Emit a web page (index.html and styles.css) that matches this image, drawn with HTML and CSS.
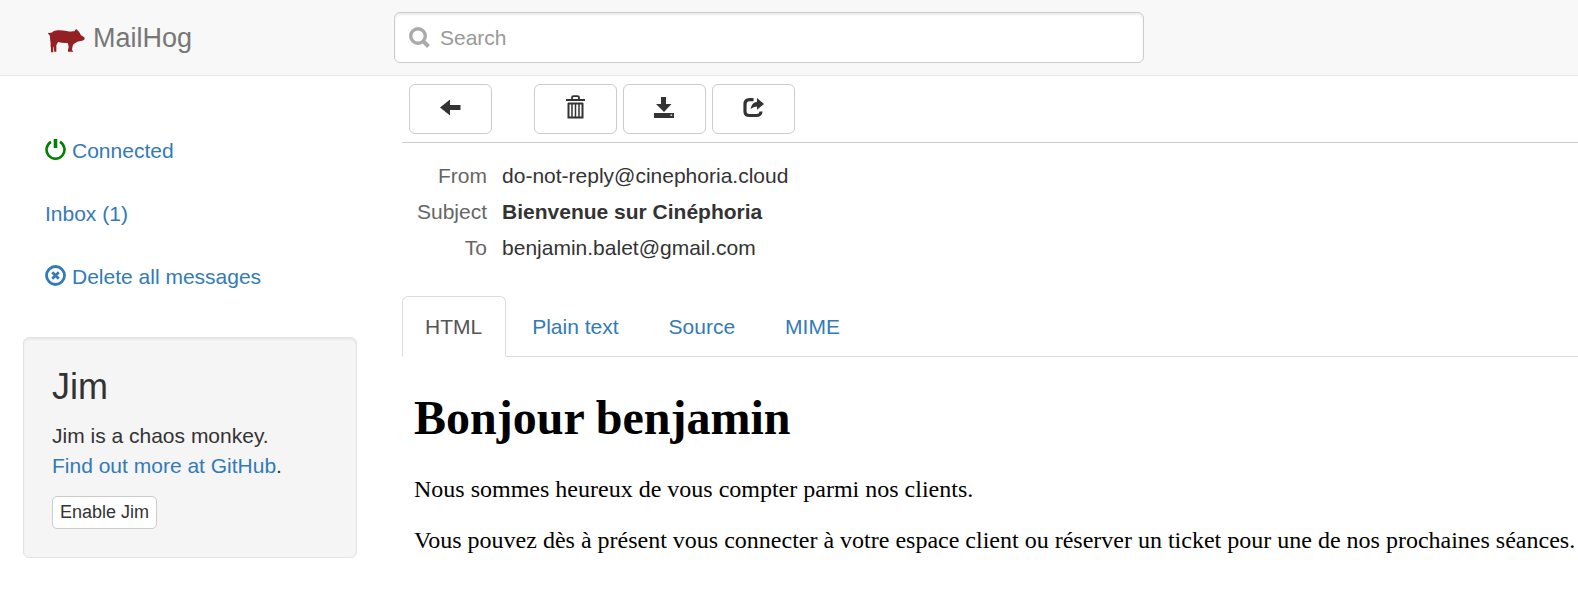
FILE: index.html
```html
<!DOCTYPE html>
<html lang="en">
<head>
<meta charset="utf-8">
<title>MailHog</title>
<link rel="stylesheet" href="styles.css">
</head>
<body>
<header class="navbar">
  <a class="brand" href="#">
    <svg class="brand-logo" viewBox="0 0 111 72" aria-hidden="true"><path d="M0 14Q1 10 5 12Q9 9 11 11Q16 5 28 4Q42 3 56 6Q66 9 75 7L79 7L84 0L91 6Q96 11 99 19L109 25L110 31Q106 36 98 36L88 38Q82 42 77 45Q73 50 73 57L72 62L76 68H60V61L62 56Q62 48 59 42Q44 43 30 39Q27 45 25 49L25 57V68H19L17 59V52L15 57L16 70H9V58Q7 50 8 43Q6 35 6 24Q6 20 7 17Q6 22 4 19Q4 16 0 14Z"/></svg>
    <span>MailHog</span>
  </a>
  <form class="search" role="search">
    <svg class="search-icon" viewBox="0 0 21 21" aria-hidden="true"><circle cx="9" cy="9" r="7.300" fill="none" stroke="currentColor" stroke-width="3.400"/><path d="M14 14L19.500 19.500" stroke="currentColor" stroke-width="4" fill="none"/></svg>
    <input class="search-input" type="text" placeholder="Search" aria-label="Search">
  </form>
</header>
<div class="page">
  <aside class="sidebar">
    <ul class="menu">
      <li><a href="#"><svg class="icon status" viewBox="0 0 21 21" aria-hidden="true"><path d="M6 2.900A9 9 0 1 0 15 2.900" fill="none" stroke="currentColor" stroke-width="2.600"/><path d="M10.500 0V9" stroke="currentColor" stroke-width="3.600"/></svg><span>Connected</span></a></li>
      <li><a href="#">Inbox (1)</a></li>
      <li><a href="#"><svg class="icon" viewBox="0 0 21 21" aria-hidden="true"><circle cx="10.500" cy="10.500" r="9" fill="none" stroke="currentColor" stroke-width="2.800"/><path d="M7.200 7.200L13.800 13.800M13.800 7.200L7.200 13.800" stroke="currentColor" stroke-width="2.700"/></svg><span>Delete all messages</span></a></li>
    </ul>
    <section class="well">
      <h3>Jim</h3>
      <p>Jim is a chaos monkey.<br><a href="#">Find out more at GitHub</a>.</p>
      <button class="btn btn-small" type="button">Enable Jim</button>
    </section>
  </aside>
  <main class="preview">
    <div class="toolbar">
      <button class="btn btn-tool" type="button" aria-label="Back"><svg class="icon" viewBox="0 0 21 21" aria-hidden="true"><path d="M0 10.500L10 2.500V8H20.500V13H10V18.500Z" fill="currentColor"/></svg></button>
      <div class="group">
        <button class="btn btn-tool" type="button" aria-label="Delete"><svg class="icon icon-tall" viewBox="0 0 21 25" aria-hidden="true"><path d="M1 5H20M7 4.500V2.500Q7 1.200 8.500 1.200H12.500Q14 1.200 14 2.500V4.500" fill="none" stroke="currentColor" stroke-width="1.800"/><path d="M3 8.500H18M3.500 8V22.500H17.500V8" fill="none" stroke="currentColor" stroke-width="2"/><path d="M7 9V22M10.500 9V22M14 9V22" fill="none" stroke="currentColor" stroke-width="1.500"/></svg></button>
        <button class="btn btn-tool" type="button" aria-label="Download"><svg class="icon" viewBox="0 0 21 21" aria-hidden="true"><path d="M7 0H12V7H17.500L10 15L2 7H7Z" fill="currentColor"/><path fill-rule="evenodd" d="M0 16H20V21H0ZM16.500 17.500V18.700H18.200V17.500Z" fill="currentColor"/></svg></button>
        <button class="btn btn-tool" type="button" aria-label="Release"><svg class="icon" viewBox="0 0 21 21" aria-hidden="true"><path d="M10.500 2.700H6.500Q2 2.700 2 7.500V14.500Q2 18.500 6.500 18.500H13.500Q17.700 18.500 18 14.500" fill="none" stroke="currentColor" stroke-width="3.200"/><path d="M14 1L21 7L14 12.800V9.400Q10.500 9.400 7.600 12Q8.500 5.700 14 4.700Z" fill="currentColor"/></svg></button>
      </div>
    </div>
    <table class="headers">
      <tr><th scope="row">From</th><td>do-not-reply@cinephoria.cloud</td></tr>
      <tr><th scope="row">Subject</th><td><strong>Bienvenue sur Cinéphoria</strong></td></tr>
      <tr><th scope="row">To</th><td>benjamin.balet@gmail.com</td></tr>
    </table>
    <nav class="tabs">
      <a class="tab active" href="#">HTML</a>
      <a class="tab" href="#">Plain text</a>
      <a class="tab" href="#">Source</a>
      <a class="tab" href="#">MIME</a>
    </nav>
    <article class="message">
      <h1>Bonjour benjamin</h1>
      <p>Nous sommes heureux de vous compter parmi nos clients.</p>
      <p>Vous pouvez dès à présent vous connecter à votre espace client ou réserver un ticket pour une de nos prochaines séances.</p>
    </article>
  </main>
</div>
</body>
</html>
```

FILE: styles.css
```css
* { box-sizing: border-box; }

body {
  margin: 0;
  background: #fff;
  color: #333;
  font: 21px/30px "Liberation Sans", Arial, sans-serif;
}

a { color: #337ab7; text-decoration: none; }

.navbar,
.page {
  display: grid;
  grid-template-columns: 380px minmax(0, 1fr);
}

.navbar {
  align-items: center;
  padding: 12px 0;
  background: #f8f8f8;
  border-bottom: 1px solid #e7e7e7;
}

.brand {
  display: flex;
  align-items: center;
  gap: 8px;
  padding-left: 48px;
  color: #777;
  font-size: 27px;
}

.brand-logo {
  width: 37px;
  height: 24px;
  margin-top: 6px;
  fill: #932023;
}

.search {
  display: grid;
  align-items: center;
  max-width: 764px;
  padding-left: 14px;
}

.search-icon,
.search-input { grid-area: 1 / 1; }

.search-icon {
  z-index: 1;
  width: 21px;
  height: 21px;
  margin-left: 15px;
  color: #aaa;
}

.search-input {
  width: 100%;
  height: 51px;
  padding: 9px 18px 9px 45px;
  border: 1px solid #ccc;
  border-radius: 6px;
  background: #fff;
  box-shadow: inset 0 2px 2px rgba(0, 0, 0, .075);
  color: #555;
  font: inherit;
}

.search-input::placeholder { color: #999; opacity: 1; }

.icon {
  display: block;
  width: 21px;
  height: 21px;
}

.icon-tall { height: 25px; }

.sidebar { padding: 45px 23px 0; }

.menu {
  display: grid;
  gap: 3px;
  margin: 0 0 30px;
  padding: 0;
  list-style: none;
}

.menu a {
  display: flex;
  gap: 6px;
  padding: 15px 22px;
}

.menu .icon { margin-top: 3px; }

.status { color: green; }

.well {
  padding: 28px;
  border: 1px solid #e3e3e3;
  border-radius: 6px;
  background: #f5f5f5;
  box-shadow: inset 0 2px 2px rgba(0, 0, 0, .05);
}

.well h3 {
  margin: 0 0 13px;
  font-size: 36px;
  font-weight: 400;
  line-height: 42px;
}

.well p { margin: 0 0 15px; }

.btn {
  border: 1px solid #ccc;
  border-radius: 6px;
  background: #fff;
  color: #333;
  font: inherit;
}

.btn-small {
  display: block;
  padding: 1px 7px 2px;
  border-radius: 5px;
  font-size: 18px;
  line-height: 28px;
}

.preview { padding-left: 22px; }

.toolbar {
  display: flex;
  gap: 42px;
  padding: 8px 7px;
  border-bottom: 1px solid #ccc;
}

.group { display: flex; gap: 6px; }

.btn-tool {
  display: grid;
  place-items: center;
  width: 83px;
  height: 50px;
  padding: 0 0 3px;
}

.headers {
  margin: 15px 0 30px 15px;
  border-collapse: collapse;
}

.headers th,
.headers td { padding: 3px 0; }

.headers th {
  padding-right: 15px;
  color: #666;
  font-weight: 400;
  text-align: right;
}

.tabs {
  display: flex;
  gap: 3px;
  border-bottom: 1px solid #ddd;
}

.tab {
  margin-bottom: -1px;
  padding: 15px 23px 14px 22px;
  border: 1px solid transparent;
  border-radius: 6px 6px 0 0;
}

.active {
  border-color: #ddd;
  border-bottom-color: #fff;
  background: #fff;
  color: #555;
}

.message {
  padding: 34px 0 0 12px;
  color: #000;
  font: 24px/27px "Liberation Serif", "Times New Roman", serif;
}

.message h1 {
  margin: 0 0 31px;
  font-size: 48px;
  line-height: 54px;
}

.message p { margin: 0 0 24px; }
```
